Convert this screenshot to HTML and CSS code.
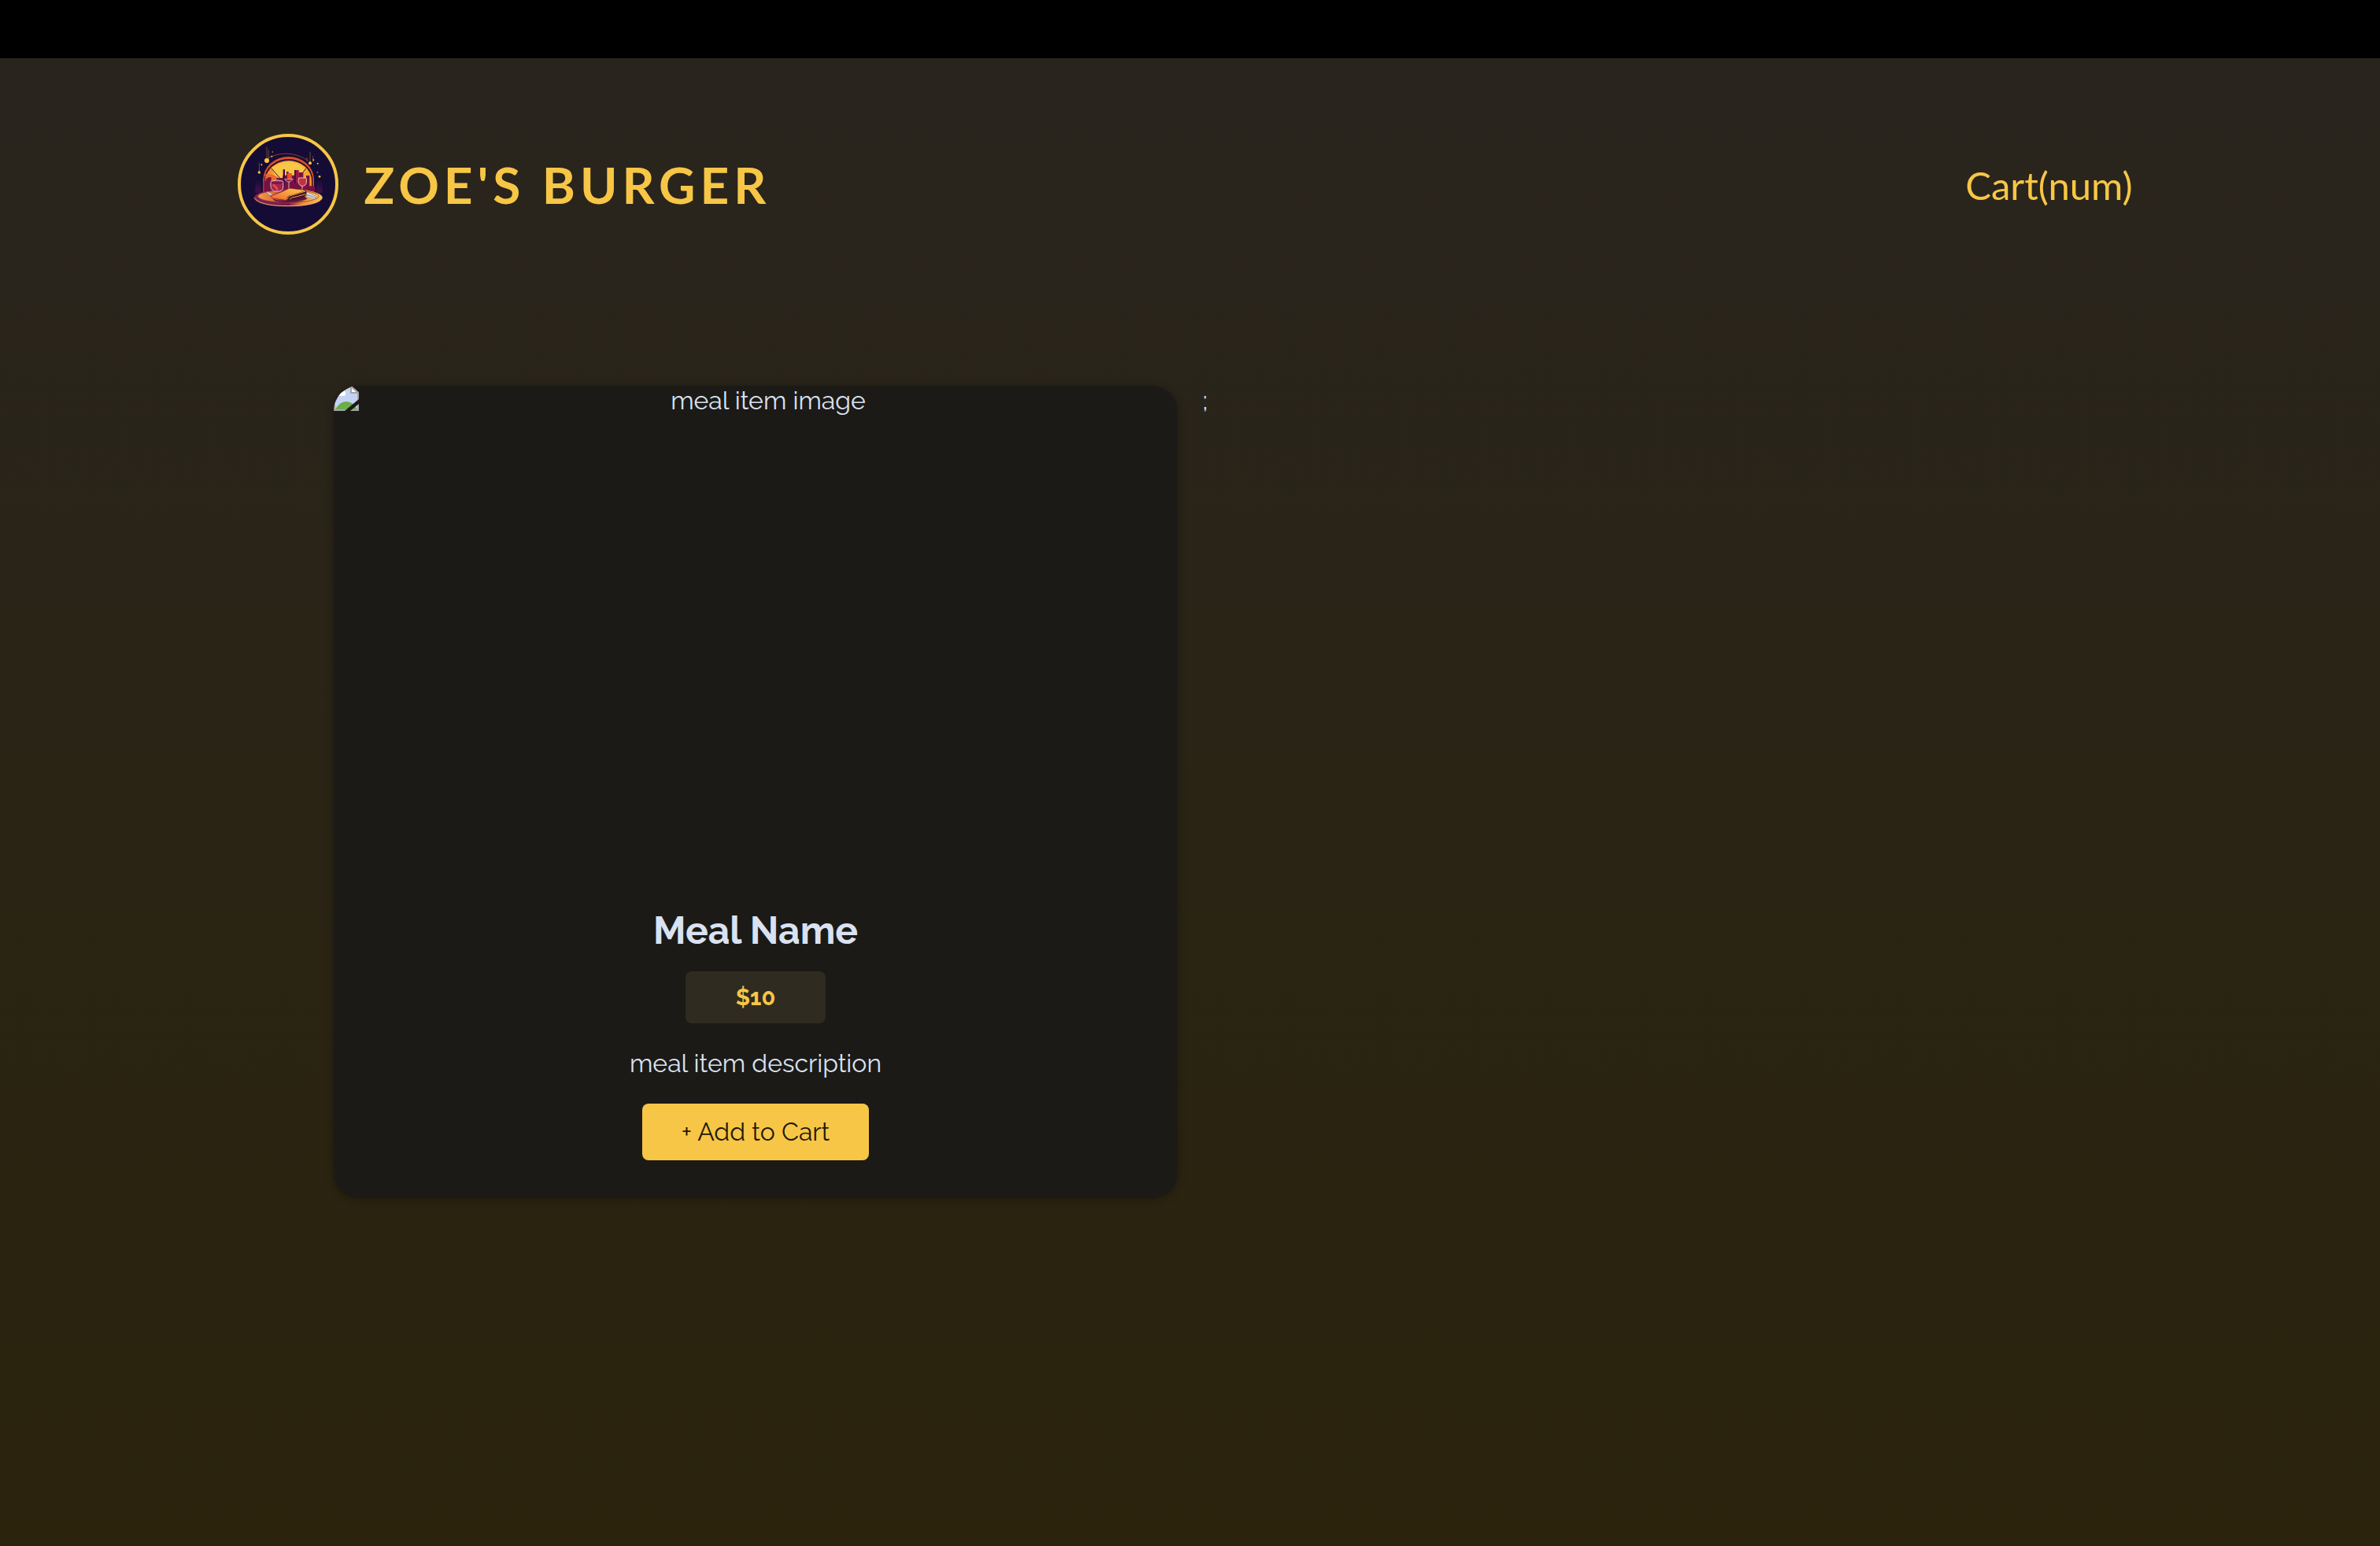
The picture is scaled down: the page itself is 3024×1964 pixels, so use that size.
FILE: index.html
```html
<!DOCTYPE html>
<html lang="en">
<head>
<meta charset="utf-8">
<meta name="viewport" content="width=device-width, initial-scale=1">
<title>Zoe's Burger</title>
<link rel="stylesheet" href="styles.css">
</head>
<body>
<div class="app">
  <header class="main-header">
    <div class="brand">
      <svg class="logo" viewBox="36 30 384 384" role="img" aria-label="Restaurant logo">
        <defs>
          <linearGradient id="sun" x1="0" y1="0" x2="1" y2="1">
            <stop offset="0" stop-color="#ee6a2c"/><stop offset=".45" stop-color="#f7b53a"/><stop offset="1" stop-color="#f08a2c"/>
          </linearGradient>
          <linearGradient id="plate" x1="0" y1="0" x2="1" y2="0">
            <stop offset="0" stop-color="#7e2450"/><stop offset=".5" stop-color="#7a1c45"/><stop offset=".7" stop-color="#e98a35"/><stop offset="1" stop-color="#f8c650"/>
          </linearGradient>
          <linearGradient id="dish" x1="0" y1="0" x2="1" y2="0">
            <stop offset="0" stop-color="#f0a050"/><stop offset=".25" stop-color="#e2703a"/><stop offset=".45" stop-color="#7a1c45"/><stop offset=".65" stop-color="#8a2a3c"/><stop offset=".8" stop-color="#f2a23a"/><stop offset="1" stop-color="#f8c650"/>
          </linearGradient>
          <linearGradient id="napkin" x1="0" y1="1" x2="1" y2="0">
            <stop offset="0" stop-color="#ec5f35"/><stop offset=".6" stop-color="#f9a83c"/><stop offset="1" stop-color="#fbcf52"/>
          </linearGradient>
          <linearGradient id="haze" x1="0" y1="0" x2="0" y2="1">
            <stop offset="0" stop-color="#4a1050" stop-opacity="0"/><stop offset="1" stop-color="#4a1050"/>
          </linearGradient>
        </defs>
        <circle cx="228" cy="222" r="186" fill="#150c36" stroke="#f7c646" stroke-width="12"/>
        <path d="M104 205h20v50h-20zM336 210h22v45h-22z" fill="url(#haze)"/>
        <path d="M100 235h260v20H100z" fill="#3a0e44" opacity=".6"/>
        <path d="M128 252a102 132 0 0 1 205 0z" fill="#210b30"/>
        <path d="M133 252V205a97 88 0 0 1 194 0v47z" fill="#d9512c"/>
        <path d="M138 252V206a92 80 0 0 1 184 0v46z" fill="#2a0d30"/>
        <path d="M142 250V208a88 76 0 0 1 176 0v42z" fill="url(#sun)"/>
        <path d="M165 160q63-50 128 2l-34 52h-70z" fill="#f8c646"/>
        <path d="M142 184q32-6 58 22v44h-58z" fill="#ec6b31"/>
        <path d="M165 162l34 39M296 162l-28 39" stroke="#4d1430" stroke-width="3"/>
        <path d="M136 250v-40h8v-10h12v24h-6v-28h14v14h20v-12h24v-10h14v-14h8v30h11v-16h20v22h7v-33h18v28h11v-16h13v40h20v21z" fill="#781142"/>
        <path d="M225 180h17v22h-17z" fill="#ed4f2b"/>
        <path d="M252 168h17v50h-17z" fill="#9c174c"/>
        <path d="M209 166h7v64h-7zM252 168h5v50h-5z" fill="#3a0c38"/>
        <path d="M140 128q82-47 165 4" fill="none" stroke="#bd5a2b" stroke-width="2"/>
        <g stroke="#9b652c" stroke-width="2"><path d="M147 80v48M154 92v32M118 140v36M312 98v40M300 120v15M323 115v22"/></g>
        <g fill="#f8c646"><circle cx="147" cy="132" r="9"/><circle cx="312" cy="142" r="6"/><circle cx="118" cy="177" r="5"/><circle cx="348" cy="193" r="4"/><circle cx="166" cy="116" r="3"/><circle cx="169" cy="99" r="2"/><circle cx="341" cy="143" r="3"/><circle cx="325" cy="130" r="3"/><circle cx="127" cy="148" r="3"/><circle cx="340" cy="177" r="2"/></g>
        <ellipse cx="229" cy="277" rx="131" ry="33" fill="#33103d"/>
        <ellipse cx="229" cy="273" rx="130" ry="33" fill="url(#plate)"/>
        <path d="M99 274q20 31 130 31t130-31" fill="none" stroke="#f0b080" stroke-width="3"/>
        <ellipse cx="229" cy="268" rx="116" ry="24" fill="url(#dish)" stroke="#8e2b3c" stroke-width="2"/>
        <path d="M170 278q50 18 120-10l12 10q-60 20-124 8z" fill="#61123e"/>
        <path d="M214 203h33l-12 10h-9z" fill="#8a2451" stroke="#e9c2c2" stroke-width="2"/>
        <path d="M231 212v30" stroke="#e9b1a0" stroke-width="3"/>
        <path d="M163 211q24-9 46 0 5 38-15 38h-19q-18-8-12-38z" fill="#a72250" stroke="#dfc1d0" stroke-width="3"/>
        <path d="M170 224q14 8 18 20" fill="none" stroke="#e0503c" stroke-width="8"/>
        <path d="M164 214q22 8 44 0" fill="none" stroke="#4a1647" stroke-width="4"/>
        <path d="M269 198h28q6 27-11 31h-7q-16-7-10-31z" fill="#c03048" stroke="#f2c1a0" stroke-width="3"/>
        <path d="M282 230v19m-13 0h25" stroke="#f5c193" stroke-width="3"/>
        <path d="M162 267l42-16 29-14 61 8 5 15-58 13-16 11-57-8z" fill="url(#napkin)" stroke="#6b1835" stroke-width="2"/>
        <path d="M223 284q-3-18 18-21l55-17q10 22-20 29-22 7-47 10z" fill="#40152b"/>
        <path d="M226 279q0-12 17-15l52-15M234 280q8-10 24-10l37-10" fill="none" stroke="#f0a23c" stroke-width="3"/>
        <path d="M148 250l20 10-5 5-15-9zM300 252l37 17-3 4-37-12zM300 264l34 10-4 5-32-9z" fill="#dce5f2" stroke="#514179" stroke-width="1"/>
      </svg>
      <h1 class="brand-name">ZOE'S BURGER</h1>
    </div>
    <nav><button class="text-button" type="button">Cart(num)</button></nav>
  </header>
  <main>
    <ul class="meals">
      <li>
        <article class="meal">
          <div class="meal-image">
            <svg class="missing-icon" viewBox="0 0 32 32" aria-hidden="true">
              <path d="M1 1h21l9 8v22H1z" fill="#c4d3f4" stroke="#a6a6a6" stroke-width="2"/>
              <path d="M5 11q0-4 4-4 4-4 6 2 1 4-3 4H6z" fill="#fff"/>
              <path d="M2 30q6-10 14-10 8 0 14 10z" fill="#6bae4b"/>
              <path d="M22 1v8h9z" fill="#fff" stroke="#a6a6a6" stroke-width="2"/>
              <path d="M14 32L32 17v6L21 32z" fill="#1c1a16"/>
            </svg>
            <span class="missing-text">meal item image</span>
          </div>
          <h3 class="meal-name">Meal Name</h3>
          <p class="meal-price">$10</p>
          <p class="meal-description">meal item description</p>
          <button class="add-button" type="button">+ Add to Cart</button>
        </article>
      </li>
      <li class="stray">;</li>
    </ul>
  </main>
</div>
</body>
</html>
```
FILE: styles.css
```css
* {
  box-sizing: border-box;
}

body {
  margin: 0;
  background: #000;
  color: #d9e2f1;
  font-family: Raleway, Lato, sans-serif;
  font-size: 32px;
  line-height: 38px;
}

h1,
h3,
p,
ul {
  margin: 0;
  padding: 0;
}

button {
  border: 0;
  cursor: pointer;
}

.app {
  min-height: calc(100vh - 74px);
  margin-top: 74px;
  background: linear-gradient(180deg, #29251e, #2b230c);
}

.main-header {
  display: flex;
  align-items: center;
  justify-content: space-between;
  padding: 96px 10%;
  color: #f7c646;
  font-family: Lato, sans-serif;
}

.brand {
  display: flex;
  align-items: center;
  gap: 32px;
}

.logo {
  width: 128px;
  height: 128px;
}

.brand-name {
  padding-top: 2px;
  font-size: 64px;
  font-weight: 700;
  line-height: 78px;
  letter-spacing: 6px;
}

.text-button {
  padding: 2px 12px 0;
  background: none;
  color: #f7c646;
  font: 400 49px/58px Lato, sans-serif;
}

.meals {
  display: grid;
  grid-template-columns: repeat(2, 1fr);
  gap: 32px;
  width: 90%;
  max-width: 2176px;
  margin: 96px auto;
  list-style: none;
}

.meal {
  display: flex;
  flex-direction: column;
  align-items: center;
  padding-bottom: 48px;
  overflow: hidden;
  border-radius: 32px;
  background: #1c1a16;
  box-shadow: 0 2px 12px rgba(0, 0, 0, 0.3);
  text-align: center;
}

.meal-image {
  display: flex;
  align-items: flex-start;
  width: 100%;
  height: 640px;
}

.missing-icon {
  width: 32px;
  height: 32px;
}

.missing-text {
  flex: 1;
}

.meal-name {
  margin: 24px 0;
  font-size: 48px;
  font-weight: 700;
  line-height: 56px;
}

.meal-price {
  padding: 14px 64px;
  border-radius: 8px;
  background: #302b20;
  color: #f7c646;
  font-size: 29px;
  font-weight: 700;
}

.meal-description {
  margin: 32px 0;
}

.add-button {
  padding: 17px 50px;
  border-radius: 8px;
  background: #f7c646;
  color: #1f1a09;
  font: inherit;
}
```
